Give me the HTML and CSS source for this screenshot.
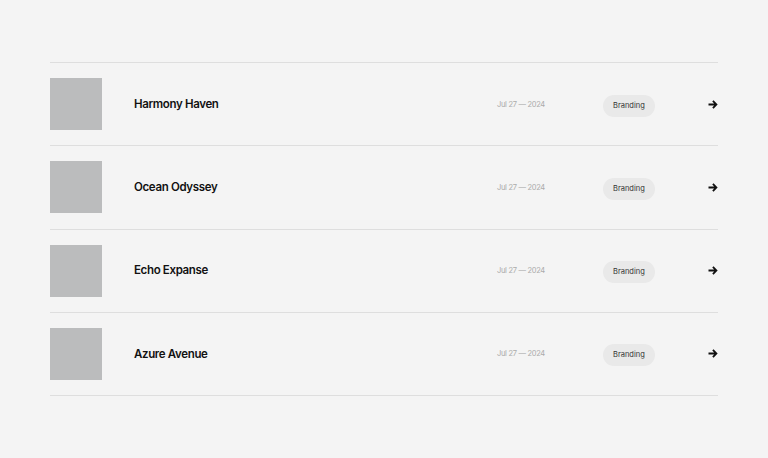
FILE: index.html
```html
<!DOCTYPE html>
<html lang="en">
<head>
<meta charset="UTF-8">
<meta name="viewport" content="width=device-width, initial-scale=1.0">
<title>Projects</title>
<link rel="stylesheet" href="styles.css">
</head>
<body>
<!-- project list -->
<div class="projects">
    <a class="project" href="#">
        <div class="project-thumb"></div>
        <div class="project-title">Harmony Haven</div>
        <div class="project-date">Jul 27 — 2024</div>
        <div class="project-tag"><span>Branding</span></div>
        <svg class="project-arrow" viewBox="0 0 10 9" width="10" height="9"><path d="M0.5 4.5H8.4M4.9 0.9L8.4 4.5L4.9 8.1" fill="none" stroke="#111" stroke-width="1.8"/></svg>
    </a>
    <a class="project" href="#">
        <div class="project-thumb"></div>
        <div class="project-title">Ocean Odyssey</div>
        <div class="project-date">Jul 27 — 2024</div>
        <div class="project-tag"><span>Branding</span></div>
        <svg class="project-arrow" viewBox="0 0 10 9" width="10" height="9"><path d="M0.5 4.5H8.4M4.9 0.9L8.4 4.5L4.9 8.1" fill="none" stroke="#111" stroke-width="1.8"/></svg>
    </a>
    <a class="project" href="#">
        <div class="project-thumb"></div>
        <div class="project-title">Echo Expanse</div>
        <div class="project-date">Jul 27 — 2024</div>
        <div class="project-tag"><span>Branding</span></div>
        <svg class="project-arrow" viewBox="0 0 10 9" width="10" height="9"><path d="M0.5 4.5H8.4M4.9 0.9L8.4 4.5L4.9 8.1" fill="none" stroke="#111" stroke-width="1.8"/></svg>
    </a>
    <a class="project" href="#">
        <div class="project-thumb"></div>
        <div class="project-title">Azure Avenue</div>
        <div class="project-date">Jul 27 — 2024</div>
        <div class="project-tag"><span>Branding</span></div>
        <svg class="project-arrow" viewBox="0 0 10 9" width="10" height="9"><path d="M0.5 4.5H8.4M4.9 0.9L8.4 4.5L4.9 8.1" fill="none" stroke="#111" stroke-width="1.8"/></svg>
    </a>
</div>
</body>
</html>
```
FILE: styles.css
```css
/* global */
body, html {
    margin: 0;
    padding: 0;
    background: #f4f4f4;
    font-family: Inter, "Noto Sans", sans-serif;
}

/* list */
.projects {
    margin: 62px 50px 0;
    border-top: 1px solid #dedede;
}

.project {
    display: grid;
    grid-template-columns: 52px 1fr 106px 105px 10px;
    align-items: center;
    padding: 15.15px 0;
    border-bottom: 1px solid #dedede;
    text-decoration: none;
    color: #111;
}

.project-thumb {
    width: 52px;
    height: 52px;
    background: #bbbcbd;
}

.project-title {
    padding-left: 32px;
    font-size: 11.5px;
    font-weight: 600;
    letter-spacing: -0.35px;
    color: #111;
    line-height: 1;
    padding-top: 1px;
}

.project-date {
    font-size: 7.5px;
    letter-spacing: -0.3px;
    color: #ababab;
}

.project-tag span {
    display: inline-block;
    height: 22px;
    line-height: 22px;
    padding: 0 10px;
    border-radius: 11px;
    background: #e9e9e9;
    font-size: 7.5px;
    color: #333;
}

.project-arrow {
    display: block;
}
```
